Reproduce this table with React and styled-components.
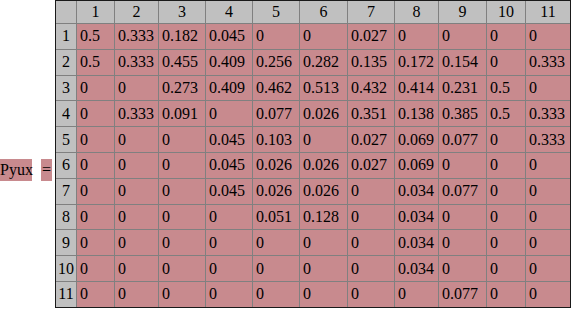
import React from "react";
import styled, { createGlobalStyle } from "styled-components";

const GlobalStyle = createGlobalStyle`
  html, body {
    margin: 0;
    padding: 0;
    background: #ffffff;
  }
  body {
    font-family: "Liberation Serif", "Times New Roman", serif;
  }
`;

const Page = styled.div`
  display: flex;
  align-items: center;
  width: 588px;
  height: 309px;
  overflow: hidden;
`;

const LabelGroup = styled.div`
  display: flex;
  align-items: center;
  gap: 9px;
  padding-top: 30px;
  margin-right: 3px;
`;

const Label = styled.div`
  background: #c88a8e;
  color: #000;
  font-size: 16px;
  line-height: 22px;
  height: 22px;
  width: ${p => p.$width}px;
  text-align: center;
  white-space: nowrap;
`;

const Matrix = styled.div`
  display: grid;
  grid-template-columns: 20px 37px 43px 46px 46px 46px 47px 46px 43px 47px 38px 44px;
  grid-template-rows: 22px repeat(11, 24.8px);
  gap: 1px;
  background: #808080;
  border: 1px solid #1a1a1a;
  align-self: flex-start;
  font-size: 16px;
  color: #000;
`;

const Cell = styled.div`
  display: flex;
  align-items: center;
  justify-content: ${p => (p.$header ? "center" : "flex-start")};
  padding-left: ${p => (p.$header ? "0" : "3px")};
  background: ${p => (p.$header ? "#c0c0c0" : "#c88a8e")};
  white-space: nowrap;
  overflow: hidden;
`;

const data = [
  ["0.5", "0.333", "0.182", "0.045", "0", "0", "0.027", "0", "0", "0", "0"],
  ["0.5", "0.333", "0.455", "0.409", "0.256", "0.282", "0.135", "0.172", "0.154", "0", "0.333"],
  ["0", "0", "0.273", "0.409", "0.462", "0.513", "0.432", "0.414", "0.231", "0.5", "0"],
  ["0", "0.333", "0.091", "0", "0.077", "0.026", "0.351", "0.138", "0.385", "0.5", "0.333"],
  ["0", "0", "0", "0.045", "0.103", "0", "0.027", "0.069", "0.077", "0", "0.333"],
  ["0", "0", "0", "0.045", "0.026", "0.026", "0.027", "0.069", "0", "0", "0"],
  ["0", "0", "0", "0.045", "0.026", "0.026", "0", "0.034", "0.077", "0", "0"],
  ["0", "0", "0", "0", "0.051", "0.128", "0", "0.034", "0", "0", "0"],
  ["0", "0", "0", "0", "0", "0", "0", "0.034", "0", "0", "0"],
  ["0", "0", "0", "0", "0", "0", "0", "0.034", "0", "0", "0"],
  ["0", "0", "0", "0", "0", "0", "0", "0", "0.077", "0", "0"]
];

const App = () => {
  const cols = data[0].map((_, i) => i + 1);
  return (
    <Page>
      <GlobalStyle />
      <LabelGroup>
        <Label $width={32}>Pyux</Label>
        <Label $width={11}>=</Label>
      </LabelGroup>
      <Matrix>
        <Cell $header />
        {cols.map(c => (
          <Cell $header key={"h" + c}>
            {c}
          </Cell>
        ))}
        {data.map((row, r) => (
          <React.Fragment key={"r" + r}>
            <Cell $header>{r + 1}</Cell>
            {row.map((v, c) => (
              <Cell key={c}>{v}</Cell>
            ))}
          </React.Fragment>
        ))}
      </Matrix>
    </Page>
  );
};

export default App;
